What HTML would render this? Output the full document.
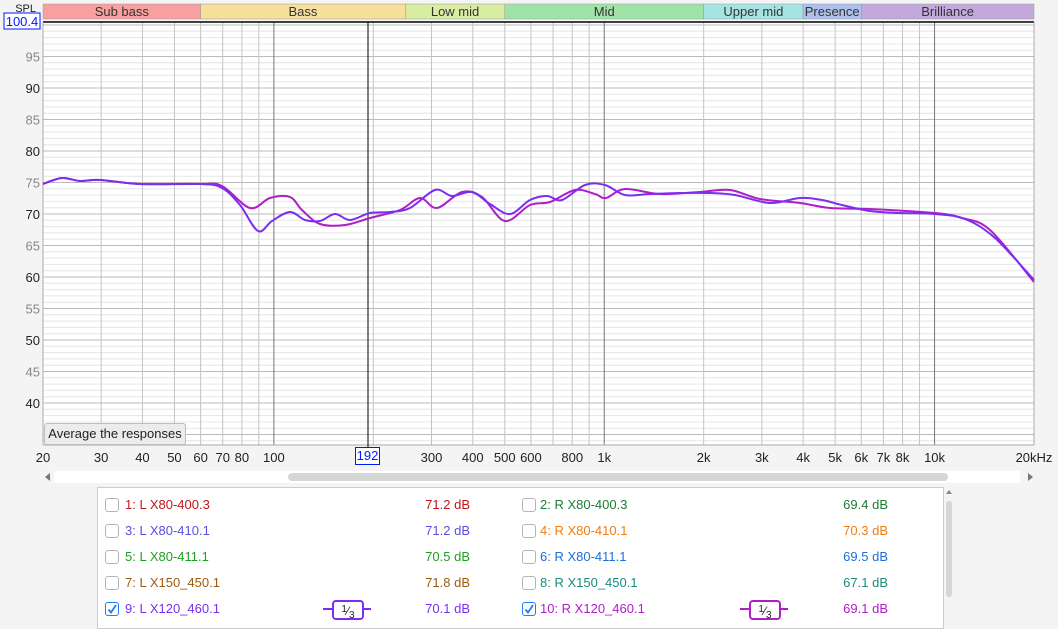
<!DOCTYPE html>
<html><head><meta charset="utf-8"><style>
body{margin:0;width:1058px;height:625px;background:#f4f4f4;font-family:"Liberation Sans",sans-serif;overflow:hidden;position:relative}
.a{position:absolute}
.row{position:absolute;height:20px;font-size:13px;line-height:20px}
.cb{position:absolute;width:12px;height:12px;border:1px solid #b5b5b5;border-radius:3px;background:#fff;top:3px}
.cb.on{border-color:#1a7ff0}
.val{position:absolute;text-align:right;width:80px}
</style></head><body>
<svg class="a" style="left:0;top:0" width="1058" height="470" id="g" font-family="Liberation Sans, sans-serif"></svg>
<div class="a" style="left:44px;top:423px;width:140px;height:20px;background:#ececec;border:1px solid #bdbdbd;border-radius:3px;font-size:13px;line-height:20px;text-align:center;color:#222">Average the responses</div>
<div class="a" style="left:355px;top:447px;width:23px;height:16px;border:1px solid #0019ff;background:#fff;color:#0019ff;font-size:13px;line-height:16px;text-align:center">192</div>
<div class="a" style="left:54px;top:471px;width:966px;height:12px;background:#fff"></div>
<div class="a" style="left:288px;top:473px;width:660px;height:8px;background:#d6d6d6;border-radius:4px"></div>
<div class="a" style="left:45px;top:473px;width:0;height:0;border:4px solid transparent;border-right:5px solid #777;border-left:0"></div>
<div class="a" style="left:1028px;top:473px;width:0;height:0;border:4px solid transparent;border-left:5px solid #777;border-right:0"></div>
<div class="a" style="left:97px;top:487px;width:845px;height:140px;background:#fff;border:1px solid #ccc"></div>
<div class="a" style="left:946px;top:501px;width:6px;height:96px;background:#d6d6d6;border-radius:3px"></div>
<div class="a" style="left:946px;top:490px;width:0;height:0;border:3px solid transparent;border-bottom:4px solid #888;border-top:0"></div>
<div id="leg"></div>
<script>
const g=document.getElementById('g');let s='';
const X=f=>43+991*Math.log10(f/20)/3;const Y=d=>214-(d-70)*6.3;
const bands=[[20,60,'Sub bass','#f8a0a0'],[60,250,'Bass','#f6e09c'],[250,500,'Low mid','#d9eda2'],[500,2000,'Mid','#a0e2a8'],[2000,4000,'Upper mid','#a6e3e3'],[4000,6000,'Presence','#aec0ec'],[6000,20000,'Brilliance','#c3a8dc']];
bands.forEach(b=>{let x1=X(b[0]),x2=X(b[1]);s+=`<rect x="${x1}" y="4" width="${x2-x1}" height="15" fill="${b[3]}" stroke="#999" stroke-width="0.5"/><text x="${(x1+x2)/2}" y="16" font-size="13" text-anchor="middle" fill="#333">${b[2]}</text>`});
s+=`<rect x="43" y="22" width="991" height="423" fill="#fff"/>`;
for(let d=34;d<=100;d++){let y=Y(d);s+=`<line x1="43" x2="1034" y1="${y}" y2="${y}" stroke="${d%5==0?'#bbb':'#e6e6e6'}" stroke-width="1"/>`;}
const fr=[];for(let m of[10,100,1000,10000])for(let k=1;k<10;k++){let f=m*k;if(f>=20&&f<=20000)fr.push(f)}
fr.forEach(f=>{let x=X(f);let maj=[100,1000,10000].includes(f);s+=`<line x1="${x}" x2="${x}" y1="22" y2="445" stroke="${maj?'#777':'#c4c4c4'}" stroke-width="1"/>`});
s+=`<line x1="43" x2="1034" y1="22" y2="22" stroke="#000" stroke-width="1.5"/><line x1="43" x2="43" y1="22" y2="445" stroke="#aaa"/><line x1="43" x2="1034" y1="445" y2="445" stroke="#aaa"/><line x1="1034" x2="1034" y1="22" y2="445" stroke="#aaa"/>`;
for(let d=40;d<=95;d+=5){s+=`<text x="40" y="${Y(d)+5}" font-size="13" text-anchor="end" fill="${d%10?'#888':'#222'}">${d}</text>`}
s+=`<text x="36" y="12" font-size="11" text-anchor="end" fill="#222">SPL</text><rect x="4" y="13" width="36" height="16" fill="#fff" stroke="#0019ff"/><text x="22" y="26" font-size="13" text-anchor="middle" fill="#0019ff">100.4</text>`;
[[20,'20'],[30,'30'],[40,'40'],[50,'50'],[60,'60'],[70,'70'],[80,'80'],[100,'100'],[300,'300'],[400,'400'],[500,'500'],[600,'600'],[800,'800'],[1000,'1k'],[2000,'2k'],[3000,'3k'],[4000,'4k'],[5000,'5k'],[6000,'6k'],[7000,'7k'],[8000,'8k'],[10000,'10k']].forEach(a=>{s+=`<text x="${X(a[0])}" y="462" font-size="13" text-anchor="middle" fill="#222">${a[1]}</text>`});
s+=`<text x="1034" y="462" font-size="13" text-anchor="middle" fill="#222">20kHz</text>`;
s+=`<line x1="368" x2="368" y1="22" y2="447" stroke="#000" stroke-width="1"/>`;
function sm(p){let d=`M${p[0][0]},${p[0][1]}`;for(let i=0;i<p.length-1;i++){let p0=p[i-1]||p[i],p1=p[i],p2=p[i+1],p3=p[i+2]||p2;d+=` C${p1[0]+(p2[0]-p0[0])/6},${p1[1]+(p2[1]-p0[1])/6} ${p2[0]-(p3[0]-p1[0])/6},${p2[1]-(p3[1]-p1[1])/6} ${p2[0]},${p2[1]}`}return d}
const A=[[43,184],[62,178],[80,181],[100,180],[140,184],[200,184],[222,188],[240,205],[258,231],[272,221],[290,212],[305,220],[320,221],[335,214],[350,220],[370,213],[390,212],[410,208],[435,190],[452,196],[472,192],[490,204],[510,214],[530,200],[547,196],[562,200],[585,185],[605,185],[625,195],[650,194],[680,193],[710,193],[735,195],[770,203],[800,198],[822,200],[842,205],[870,211],[900,213],[935,214],[965,219],[995,238],[1034,280]];
const B=[[43,184],[62,178],[80,181],[100,180],[140,184],[200,184],[222,186],[250,208],[270,198],[290,197],[302,210],[320,224],[345,225],[370,218],[400,210],[420,198],[437,208],[462,192],[482,197],[505,221],[530,205],[550,202],[575,190],[595,194],[606,198],[625,189],[660,194],[700,192],[730,190],[760,199],[800,203],[830,208],[870,209],[935,213],[962,218],[990,230],[1034,282]];
s+=`<path d="${sm(B)}" fill="none" stroke="#b01ec8" stroke-width="2"/><path d="${sm(A)}" fill="none" stroke="#7a2ff0" stroke-width="2"/>`;
g.innerHTML=s;
const L=[[1,'L X80-400.3','71.2','#c0161c',0],[2,'R X80-400.3','69.4','#1f7a3a',0],[3,'L X80-410.1','71.2','#5a4fe0',0],[4,'R X80-410.1','70.3','#f07d12',0],[5,'L X80-411.1','70.5','#20a020',0],[6,'R X80-411.1','69.5','#1c6fd8',0],[7,'L X150_450.1','71.8','#a05a10',0],[8,'R X150_450.1','67.1','#1a8c7c',0],[9,'L X120_460.1','70.1','#7a2ff0',1],[10,'R X120_460.1','69.1','#b01ec8',1]];
let h='';L.forEach((r,i)=>{let c=i%2,top=495+Math.floor(i/2)*26,x=c?522:105,vx=c?808:390;
h+=`<div class="row" style="left:${x}px;top:${top}px;color:${r[3]};width:400px"><div class="cb ${r[4]?'on':''}" style="left:0">${r[4]?'<svg width="12" height="12" style="position:absolute;left:0;top:0"><path d="M2.5 6.5 L5 9.5 L10 2" fill="none" stroke="#1a7ff0" stroke-width="1.8"/></svg>':''}</div><span style="position:absolute;left:${c?18:20}px">${r[0]}: ${r[1]}</span><span class="val" style="left:${vx-x}px">${r[2]} dB</span>`;
if(r[4]){let sx=c?(740-x):(323-x);h+=`<div style="position:absolute;left:${sx}px;top:9px;width:48px;height:2px;background:${r[3]}"></div><div style="position:absolute;left:${sx+9}px;top:1px;width:28px;height:16px;border:2px solid ${r[3]};border-radius:4px;background:#fff;color:#222;font-size:12px;line-height:16px;text-align:center"><span style="font-size:10px;vertical-align:3px">1</span>⁄<span style="font-size:10px;vertical-align:-3px">3</span></div>`}
h+='</div>'});
document.getElementById('leg').innerHTML=h;
</script>
</body></html>
